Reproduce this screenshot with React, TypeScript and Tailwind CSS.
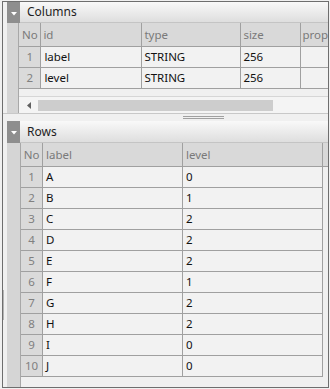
import React from "react";

const F = { fontFamily: '"Noto Sans", "Open Sans", sans-serif' };

function Tab() {
  return (
    <div className="w-[13px] h-full bg-[#8e8e8e] flex items-start justify-center pt-[10px]">
      <svg width="6" height="4" viewBox="0 0 6 4">
        <polygon points="0,0 6,0 3,3.5" fill="#ffffff" />
      </svg>
    </div>
  );
}

function SectionHeader({ title, h }: { title: string; h: string }) {
  return (
    <div className={`flex ${h}`}>
      <Tab />
      <div className="flex-1 flex items-center pl-[7px] bg-gradient-to-b from-[#f9f9f9] to-[#dedede] border-b border-[#c4c4c4] text-[#1e1e1e] text-[12px]">
        {title}
      </div>
    </div>
  );
}

const colsData = [
  ["1", "label", "STRING", "256"],
  ["2", "level", "STRING", "256"],
];

const rowsData = [
  ["1", "A", "0"],
  ["2", "B", "1"],
  ["3", "C", "2"],
  ["4", "D", "2"],
  ["5", "E", "2"],
  ["6", "F", "1"],
  ["7", "G", "2"],
  ["8", "H", "2"],
  ["9", "I", "0"],
  ["10", "J", "0"],
];

export default function App() {
  return (
    <div className="w-[330px] h-[389px] bg-[#f0f0f0] pt-[1px] pl-[2px]" style={F}>
      <div className="w-[327px] h-[387px] border border-[#6e6e6e] flex flex-col text-[11.5px] overflow-hidden relative">
        <div className="absolute left-[0px] top-[288px] w-[1px] h-[30px] bg-[#b4b4b4]" />
        {/* Columns panel */}
        <div className="flex flex-col pl-[4px]">
          <SectionHeader title="Columns" h="h-[21px]" />
          <div className="flex">
            <div className="w-[14px] bg-[#d5d5d5] border-r border-[#a8a8a8] h-[90px]" />
            <div className="flex-1 flex flex-col">
              {/* header row */}
              <div className="flex h-[24px] bg-[#d9d9d9] text-[#7a7a7a] border-b border-[#a0a0a0]">
                <div className="w-[22px] border-r border-[#a0a0a0] flex items-center justify-center">No</div>
                <div className="w-[101px] border-r border-[#a0a0a0] flex items-center pl-[2px]">id</div>
                <div className="w-[99px] border-r border-[#a0a0a0] flex items-center pl-[2px]">type</div>
                <div className="w-[60px] border-r border-[#a0a0a0] flex items-center pl-[2px]">size</div>
                <div className="flex-1 flex items-center pl-[1px] whitespace-nowrap overflow-hidden">prop</div>
              </div>
              {colsData.map((r) => (
                <div key={r[0]} className="flex h-[21px] bg-[#f2f2f2] text-[#111111]">
                  <div className="w-[22px] bg-[#dadada] text-[#808080] border-r border-b border-[#a0a0a0] flex items-center justify-center">{r[0]}</div>
                  <div className="w-[101px] border-r border-b border-[#a0a0a0] flex items-center pl-[3px]">{r[1]}</div>
                  <div className="w-[99px] border-r border-b border-[#a0a0a0] flex items-center pl-[2px]">{r[2]}</div>
                  <div className="w-[60px] border-r border-b border-[#a0a0a0] flex items-center pl-[2px]">{r[3]}</div>
                  <div className="flex-1 border-b border-[#a0a0a0]" />
                </div>
              ))}
              <div className="h-[7px] bg-[#f0f0f0]" />
              {/* scrollbar */}
              <div className="h-[17px] bg-[#f4f4f4] border-t border-[#d6d6d6] flex items-center">
                <div className="w-[19px] flex items-center justify-center">
                  <svg width="4" height="7" viewBox="0 0 4 7">
                    <polygon points="4,0 4,7 0,3.5" fill="#606060" />
                  </svg>
                </div>
                <div className="w-[235px] h-[11px] bg-[#cdcdcd]" />
              </div>
            </div>
          </div>
        </div>
        {/* splitter */}
        <div className="h-[8px] border-t border-[#c8c8c8] relative">
          <div className="absolute left-[180px] top-[2px] w-[41px] h-[1px] bg-[#a0a0a0]" />
          <div className="absolute left-[180px] top-[4px] w-[41px] h-[1px] bg-[#a0a0a0]" />
        </div>
        {/* Rows panel */}
        <div className="flex flex-col pl-[4px] flex-1">
          <SectionHeader title="Rows" h="h-[22px]" />
          <div className="flex flex-1">
            <div className="w-[14px] bg-[#d5d5d5] border-r border-[#a8a8a8]" />
            <div className="flex-1 flex flex-col">
              <div className="flex h-[24px] bg-[#d9d9d9] text-[#7a7a7a] border-b border-[#a0a0a0]">
                <div className="w-[22px] border-r border-[#a0a0a0] flex items-center justify-center">No</div>
                <div className="w-[140px] border-r border-[#a0a0a0] flex items-center pl-[3px]">label</div>
                <div className="w-[140px] border-r border-[#a0a0a0] flex items-center pl-[3px]">level</div>
                <div className="flex-1" />
              </div>
              {rowsData.map((r) => (
                <div key={r[0]} className="flex h-[21px] text-[#111111]">
                  <div className="w-[22px] bg-[#dadada] text-[#808080] border-r border-b border-[#a0a0a0] flex items-center justify-center">{r[0]}</div>
                  <div className="w-[140px] bg-[#f2f2f2] border-r border-b border-[#a0a0a0] flex items-center pl-[3px]">{r[1]}</div>
                  <div className="w-[140px] bg-[#f2f2f2] border-r border-b border-[#a0a0a0] flex items-center pl-[3px]">{r[2]}</div>
                  <div className="flex-1" />
                </div>
              ))}
            </div>
          </div>
        </div>
      </div>
    </div>
  );
}
